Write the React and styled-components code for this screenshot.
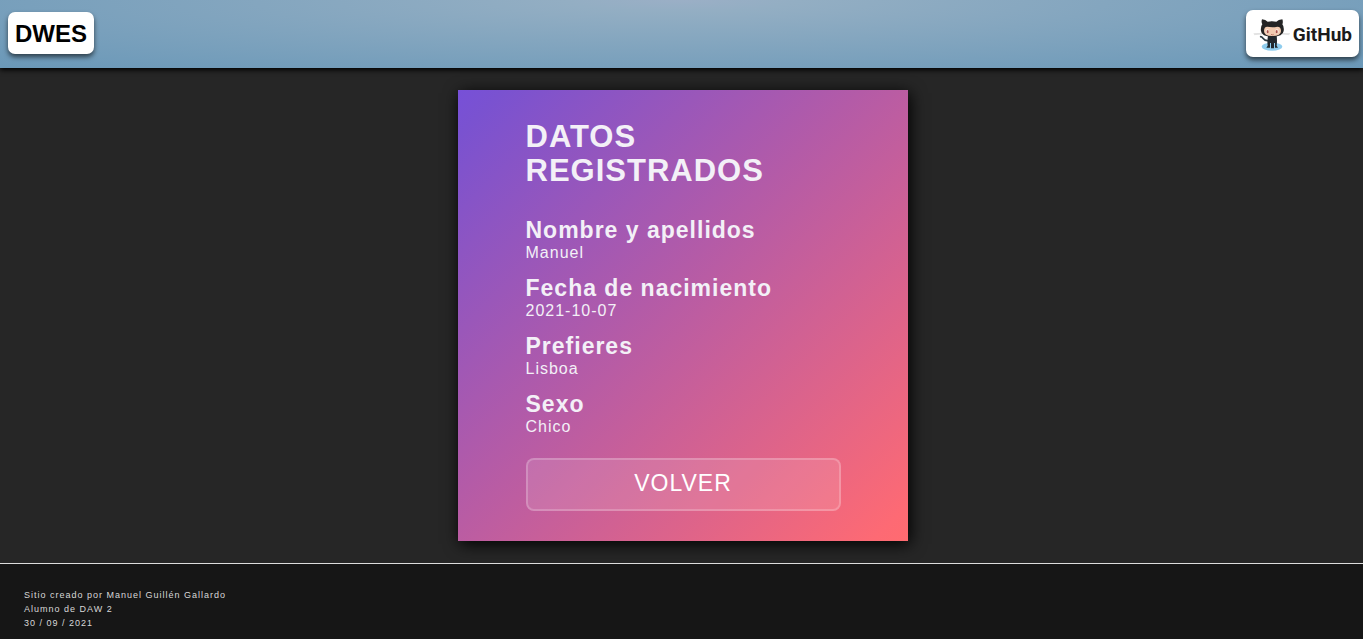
import React from "react";
import styled, { createGlobalStyle } from "styled-components";

const GlobalStyle = createGlobalStyle`
  *, *::before, *::after { box-sizing: border-box; }
  body {
    margin: 0;
    background: #262626;
    font-family: "Liberation Sans", Arial, sans-serif;
  }
  h1, h2, p, dl, dt, dd { margin: 0; }
`;

const Page = styled.div`
  min-height: 100vh;
  display: flex;
  flex-direction: column;
`;

const Header = styled.header`
  position: relative;
  display: flex;
  align-items: center;
  justify-content: space-between;
  height: 68px;
  padding: 0 4px 2px 8px;
  background: radial-gradient(ellipse at top, #9bafc6 0%, #93aec3 12%, #6a98b8 100%);
  box-shadow: 0 2px 5px #000;
`;

const Badge = styled.a`
  display: flex;
  align-items: center;
  gap: 2px;
  height: ${({ $tall }) => ($tall ? 47 : 42)}px;
  padding: 2px 7px 0;
  border-radius: 7px;
  background: #fff;
  color: ${({ $tall }) => ($tall ? "#1b1b1b" : "#000")};
  box-shadow: 0 3px 5px rgba(0, 0, 0, 0.6);
  font-weight: bold;
  font-size: 24px;
  text-decoration: none;
`;

const Wordmark = styled.span`
  font-family: Roboto, "Liberation Sans", sans-serif;
  font-size: 19px;
`;

const Main = styled.main`
  flex: 1;
  display: flex;
  justify-content: center;
  align-items: center;
  padding: 22px 22px 22px 24px;
`;

const Card = styled.section`
  width: 450px;
  max-width: 100%;
  padding: 30px 67px 30px 68px;
  color: #f3f0f7;
  background: linear-gradient(135deg, #7750d8 0%, #7a52d0 5%, #b45ba7 45%, #fd6a74 96%, #ff6b70 100%);
  box-shadow: 2px 3px 15px #000;
`;

const Title = styled.h1`
  font-size: 31px;
  line-height: 34px;
  letter-spacing: 1px;
`;

const Data = styled.dl`
  display: grid;
  gap: 12px;
  margin-top: 29px;
`;

const Label = styled.dt`
  font-size: 23px;
  font-weight: bold;
  line-height: 26px;
  letter-spacing: 1px;
`;

const Value = styled.dd`
  font-size: 16px;
  line-height: 20px;
  letter-spacing: 1px;
`;

const BackButton = styled.button`
  display: block;
  width: 100%;
  height: 53px;
  margin-top: 21px;
  padding: 0 0 2px;
  border: 2px solid rgba(255, 255, 255, 0.3);
  border-radius: 8px;
  background: rgba(255, 255, 255, 0.12);
  background-clip: padding-box;
  color: #fff;
  font-family: inherit;
  font-size: 23px;
  letter-spacing: 1px;
`;

const Footer = styled.footer`
  height: 76px;
  padding: 24px;
  border-top: 1px solid #ddd;
  background: #161616;
  color: #d8d8d8;
  font-size: 9px;
  line-height: 14px;
  letter-spacing: 1px;
`;

const fields = [
  ["Nombre y apellidos", "Manuel"],
  ["Fecha de nacimiento", "2021-10-07"],
  ["Prefieres", "Lisboa"],
  ["Sexo", "Chico"],
];

function Octocat() {
  return (
    <svg width="38" height="35" viewBox="63 48 114 105" aria-hidden="true">
      <ellipse cx="120" cy="137" rx="31" ry="12" fill="#8fcdee" />
      <path d="M65 98 L92 97 M66 101 L92 99 M148 97 L174 98 M148 99 L172 101" stroke="#d5d5d5" strokeWidth="2" fill="none" />
      <path d="M86 107 C94 107 92 119 106 119" stroke="#2c3a42" strokeWidth="5" fill="none" strokeLinecap="round" />
      <path d="M108 104 H134 Q136 120 134 134 L138 140 H129 V126 H126 V142 H117 V126 H114 V140 H103 L107 134 Q105 120 108 104Z" fill="#21282d" />
      <path d="M90 55 Q101 56 107 62 Q120 59 133 62 Q139 56 151 55 Q154 63 151 70 Q157 77 155 90 Q153 107 121 107 Q88 107 87 90 Q85 77 91 70 Q87 63 90 55Z" fill="#242424" />
      <path d="M106 77 Q121 80 136 77 Q147 77 147 90 Q147 105 121 105 Q96 105 96 90 Q96 77 106 77Z" fill="#f2cbb0" />
      <ellipse cx="106" cy="91" rx="5" ry="7" fill="#fae6dc" />
      <ellipse cx="135" cy="91" rx="5" ry="7" fill="#fae6dc" />
      <ellipse cx="107" cy="92" rx="3" ry="5" fill="#a8544c" />
      <ellipse cx="134" cy="92" rx="3" ry="5" fill="#a8544c" />
      <path d="M117 100 Q121 103 125 100" stroke="#a8544c" strokeWidth="2" fill="none" />
    </svg>
  );
}

export default function App() {
  return (
    <Page>
      <GlobalStyle />
      <Header>
        <Badge href="#inicio">DWES</Badge>
        <Badge href="#github" $tall>
          <Octocat />
          <Wordmark>GitHub</Wordmark>
        </Badge>
      </Header>
      <Main>
        <Card>
          <Title>DATOS REGISTRADOS</Title>
          <Data>
            {fields.map(([label, value]) => (
              <div key={label}>
                <Label>{label}</Label>
                <Value>{value}</Value>
              </div>
            ))}
          </Data>
          <BackButton type="button">VOLVER</BackButton>
        </Card>
      </Main>
      <Footer>
        <p>Sitio creado por Manuel Guillén Gallardo</p>
        <p>Alumno de DAW 2</p>
        <p>30 / 09 / 2021</p>
      </Footer>
    </Page>
  );
}
